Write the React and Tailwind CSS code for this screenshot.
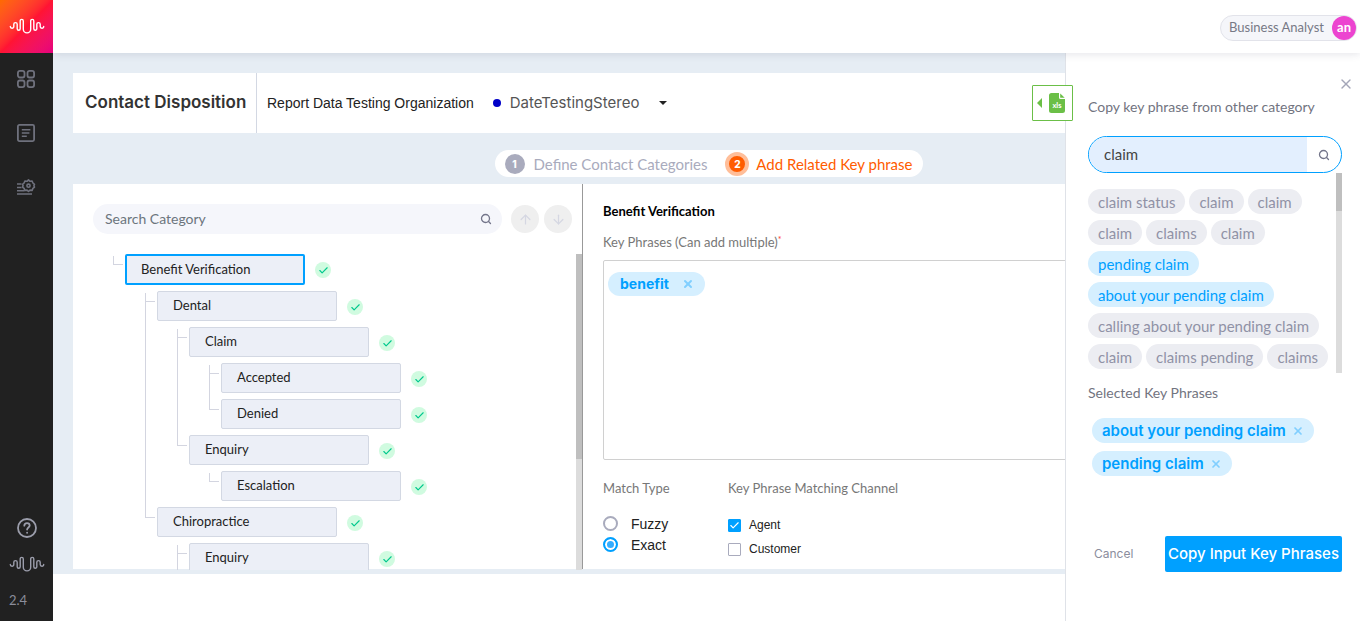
import { useState } from "react";
import { ArrowDown, ArrowUp, Check, Search, X } from "lucide-react";

// guides: one entry per ancestor level, "line" | "tee" | "end" | "none"
const CATEGORIES = [
  { name: "Benefit Verification", guides: ["end"] },
  { name: "Dental", guides: ["none", "tee"] },
  { name: "Claim", guides: ["none", "line", "tee"] },
  { name: "Accepted", guides: ["none", "line", "line", "tee"] },
  { name: "Denied", guides: ["none", "line", "line", "end"] },
  { name: "Enquiry", guides: ["none", "line", "end"] },
  { name: "Escalation", guides: ["none", "line", "none", "end"] },
  { name: "Chiropractice", guides: ["none", "end"] },
  { name: "Enquiry", guides: ["none", "none", "tee"] },
];

const PHRASES = [
  "claim status",
  "claim",
  "claim",
  "claim",
  "claims",
  "claim",
  "pending claim",
  "about your pending claim",
  "calling about your pending claim",
  "claim",
  "claims pending",
  "claims",
];

const WAVE =
  "M1.3 8.5a1.75 1.75 0 0 0 3.5 0V6.3a1.7 1.7 0 0 1 3.4 0V10.8a1.5 1.5 0 0 0 3 0V2.9a1.55 1.55 0 0 1 3.1 0V11.2a3.7 3.7 0 0 0 7.4 0V2.9a1.55 1.55 0 0 1 3.1 0V10.8a1.5 1.5 0 0 0 3 0V6.3a1.7 1.7 0 0 1 3.4 0V8.5a1.75 1.75 0 0 0 3.5 0";

function WaveLogo({ className }) {
  return (
    <svg className={className} width="36" height="17" viewBox="0 0 36 17" fill="none" stroke="currentColor" strokeWidth="1.4" strokeLinecap="round">
      <path d={WAVE} />
    </svg>
  );
}

function Sidebar() {
  return (
    <aside className="relative z-30 flex w-[53px] shrink-0 flex-col items-center bg-[#212121] text-[#6f717d]">
      <a href="#home" aria-label="Home" className="flex h-[53px] w-full items-center justify-center bg-linear-135 from-[#ff6a00] via-[#ff1433] via-50% to-[#e6007e] text-white">
        <WaveLogo />
      </a>
      <nav className="mt-[15px] flex flex-col items-center gap-8 pr-px">
        <a href="#dashboard" aria-label="Dashboard">
          <svg width="22" height="22" viewBox="0 0 22 22" fill="none" stroke="currentColor" strokeWidth="1.8">
            <rect x="2.9" y="2.9" width="6.6" height="6.6" rx="2" />
            <rect x="12.5" y="2.9" width="6.6" height="6.6" rx="2" />
            <rect x="2.9" y="12.5" width="6.6" height="6.6" rx="2" />
            <rect x="12.5" y="12.5" width="6.6" height="6.6" rx="2" />
          </svg>
        </a>
        <a href="#reports" aria-label="Reports">
          <svg width="22" height="22" viewBox="0 0 22 22" fill="none" stroke="currentColor" strokeWidth="1.8">
            <rect x="2.9" y="2.9" width="16.2" height="16.2" rx="1.5" />
            <path d="M6.8 7.8h8.6M6.8 11h7.6M6.8 14.2h5" strokeWidth="1.5" />
          </svg>
        </a>
        <a href="#settings" aria-label="Settings">
          <svg width="22" height="22" viewBox="0 0 22 22" fill="none" stroke="currentColor" strokeWidth="1.6">
            <path d="M2 8h4.5M2 11.5h4.5M2 14.8h7.5M2 18h15" />
            <path d="M13.5 3.9l1.5 1.4 2.1-.3.8 2 1.6 1.3-.6 1.4.6 1.4-1.6 1.3-.8 2-2.1-.3-1.5 1.4-1.5-1.4-2.1.3-.8-2L7.5 11.1l.6-1.4-.6-1.4 1.6-1.3.8-2 2.1.3z" strokeLinejoin="round" />
            <circle cx="13.5" cy="9.7" r="1.6" />
          </svg>
        </a>
      </nav>
      <div className="mt-auto flex w-full flex-col items-center text-[#9b9dab]">
        <a href="#help" aria-label="Help">
          <svg width="22" height="22" viewBox="0 0 22 22" fill="none" stroke="currentColor" strokeWidth="1.8" strokeLinecap="round">
            <circle cx="11" cy="11" r="9" />
            <path d="M8.3 8.7c.1-3.6 5.4-3.4 5.4-.2 0 1.9-2.6 2.1-2.6 4.1M11.1 15.6v.2" />
          </svg>
        </a>
        <WaveLogo className="mt-[17px]" />
        <span className="mt-[17px] mb-[11px] self-start pl-[9px] text-[13px] leading-5 text-[#8b8d9b]">2.4</span>
      </div>
    </aside>
  );
}

function Guide({ type }) {
  return (
    <span className="relative w-8 shrink-0">
      {type !== "none" && (
        <span className={`absolute left-5 top-0.5 border-l border-[#d3d5e0] ${type === "end" ? "h-2" : "-bottom-0.5"}`} />
      )}
      {(type === "tee" || type === "end") && (
        <span className="absolute left-5 top-2.5 w-2.5 border-t border-[#d3d5e0]" />
      )}
    </span>
  );
}

function CategoryTree() {
  const [selected, setSelected] = useState(0);

  return (
    <ul className="h-[316px] min-w-0 flex-1 overflow-hidden">
      {CATEGORIES.map((c, i) => (
        <li key={i} className={`flex ${i === 0 ? "h-[37px]" : "h-9"}`}>
          {c.guides.map((g, level) => (
            <Guide key={level} type={g} />
          ))}
          <button
            onClick={() => setSelected(i)}
            className={`w-[180px] shrink-0 rounded-[2px] bg-[#eceff7] text-left text-[13px] text-[#222] ${
              selected === i ? "h-[31px] border-2 border-[#00a0ff] pl-3.5" : "h-[30px] border border-[#d3d8e3] pl-[15px]"
            }`}
          >
            {c.name}
          </button>
          <span className="mt-2 ml-2.5 flex size-4 items-center justify-center rounded-full bg-[#d0fbe0] text-[#00c98d]">
            <Check size={11} strokeWidth={2.5} />
          </span>
        </li>
      ))}
    </ul>
  );
}

function Scrollbar({ className, thumb }) {
  return (
    <div className={`w-1.5 shrink-0 bg-[#dcdcdc] ${className}`}>
      <div className={`bg-[#bfbfbf] ${thumb}`} />
    </div>
  );
}

function CategoryPanel() {
  return (
    <section className="flex w-[510px] shrink-0 flex-col border-r border-[#999] pt-5">
      <div className="flex items-center pr-2.5 pl-5">
        <label className="flex h-[30px] flex-1 items-center rounded-full bg-[#f5f6fb] pr-2.5 pl-3">
          <input
            type="text"
            aria-label="Search Category"
            placeholder="Search Category"
            className="min-w-0 flex-1 bg-transparent text-sm outline-none placeholder:text-[#6c757d]"
          />
          <Search size={12} strokeWidth={2.6} className="text-[#73758a]" />
        </label>
        <button aria-label="Previous match" className="ml-[9px] flex size-7 items-center justify-center rounded-full bg-[#efefef] text-[#d5d7e2]">
          <ArrowUp size={15} />
        </button>
        <button aria-label="Next match" className="ml-[5px] flex size-7 items-center justify-center rounded-full bg-[#efefef] text-[#d5d7e2]">
          <ArrowDown size={15} />
        </button>
      </div>
      <div className="mt-5 flex pl-5">
        <CategoryTree />
        <Scrollbar className="h-[316px]" thumb="h-[205px]" />
      </div>
    </section>
  );
}

function RadioOption({ label, checked, onChange }) {
  return (
    <label className="flex h-[21px] items-center gap-[13px] font-['Liberation_Sans',Arial,sans-serif] text-sm text-[#222]">
      <input
        type="radio"
        name="match"
        checked={checked}
        onChange={onChange}
        className="size-[15px] appearance-none rounded-full border-2 border-[#a9abbd] checked:border-[#00a0ff] checked:bg-[#35adff] checked:shadow-[inset_0_0_0_2px_#fff]"
      />
      {label}
    </label>
  );
}

function CheckOption({ label, defaultChecked }) {
  return (
    <label className="flex h-6 items-center gap-2 font-['Liberation_Sans',Arial,sans-serif] text-xs text-[#222]">
      <span className="relative flex">
        <input
          type="checkbox"
          defaultChecked={defaultChecked}
          className="peer size-[13px] appearance-none rounded-[1px] border border-[#a9abbd] checked:border-[#00a0ff] checked:bg-[#00a0ff]"
        />
        <Check size={11} strokeWidth={2.5} className="absolute top-px left-px hidden text-white peer-checked:block" />
      </span>
      {label}
    </label>
  );
}

function KeyPhrasePanel() {
  const [match, setMatch] = useState("Exact");

  return (
    <section className="min-w-0 flex-1 pt-[17px] pl-5">
      <h2 className="text-[13px] leading-5 font-bold text-black">Benefit Verification</h2>
      <p className="mt-[11px] text-[13px] leading-5 text-[#777]">
        Key Phrases (Can add multiple)
        <sup className="text-[9px] text-[#ff3b30]">*</sup>
      </p>
      <div className="mt-2 flex h-[200px] items-start rounded-[2px] border border-[#d0d0d0] pt-[11px] pl-1">
        <span className="flex h-6 items-center gap-[13px] rounded-full bg-[#d5efff] pr-[11px] pl-3 font-['Inter',sans-serif] text-sm font-bold text-[#00a0ff]">
          benefit
          <button aria-label="Remove benefit" className="text-[#80cfff]">
            <X size={12} strokeWidth={4} />
          </button>
        </span>
      </div>
      <div className="mt-[18px] flex gap-[58px]">
        <fieldset className="w-[67px]">
          <legend className="mb-[15px] text-[13px] leading-5 whitespace-nowrap text-[#777]">Match Type</legend>
          {["Fuzzy", "Exact"].map((m) => (
            <RadioOption key={m} label={m} checked={match === m} onChange={() => setMatch(m)} />
          ))}
        </fieldset>
        <fieldset>
          <legend className="mb-[15px] text-[13px] leading-5 whitespace-nowrap text-[#777]">Key Phrase Matching Channel</legend>
          <CheckOption label="Agent" defaultChecked />
          <CheckOption label="Customer" />
        </fieldset>
      </div>
    </section>
  );
}

function CopyDrawer() {
  const [selected, setSelected] = useState(["about your pending claim", "pending claim"]);
  const [query, setQuery] = useState("claim");

  const toggle = (p) =>
    setSelected((prev) => (prev.includes(p) ? prev.filter((s) => s !== p) : [...prev, p]));

  return (
    <aside className="absolute top-[53px] right-0 bottom-0 z-10 w-[295px] border-l border-[#dfe2e8] bg-white pr-[18px] pl-[22px]">
      <button aria-label="Close" className="absolute top-[23px] right-1.5 text-[#a4a6b8]">
        <X size={16} strokeWidth={2} />
      </button>
      <h2 className="pt-11 text-sm leading-5 text-[#72747f]">Copy key phrase from other category</h2>
      <div className="mt-[19px] flex h-[37px] overflow-hidden rounded-full border border-[#00a0ff]">
        <input
          type="text"
          aria-label="Search key phrase"
          value={query}
          onChange={(e) => setQuery(e.target.value)}
          className="min-w-0 flex-1 bg-[#e3effe] pl-[15px] text-[15px] text-[#444] outline-none"
        />
        <button aria-label="Search" className="flex w-[34px] items-center justify-center text-[#73758a]">
          <Search size={12} strokeWidth={2.6} />
        </button>
      </div>
      <div className="flex justify-between">
        <ul className="flex h-[200px] flex-wrap content-start gap-x-1 gap-y-1.5 pt-4">
          {PHRASES.map((p, i) => (
            <li key={i} className="flex">
              <button
                onClick={() => toggle(p)}
                className={`h-[25px] rounded-full px-2.5 text-[15px] leading-5 ${
                  selected.includes(p) ? "bg-[#d5efff] text-[#00a0ff]" : "bg-[#ecedf2] text-[#9092a6]"
                }`}
              >
                {p}
              </button>
            </li>
          ))}
        </ul>
        <Scrollbar thumb="h-[38px]" />
      </div>
      <h3 className="mt-2.5 text-sm leading-5 text-[#72747f]">Selected Key Phrases</h3>
      <ul className="mt-[15px] ml-1 flex h-[90px] flex-col items-start gap-2">
        {selected.map((p) => (
          <li key={p} className="flex h-[25px] items-center gap-1.5 rounded-full bg-[#d5efff] px-2.5 font-['Inter',sans-serif] text-[15px] leading-5 font-semibold text-[#00a0ff]">
            {p}
            <button aria-label={`Remove ${p}`} onClick={() => toggle(p)} className="text-[#80cfff]">
              <X size={12} strokeWidth={3.5} />
            </button>
          </li>
        ))}
      </ul>
      <div className="mt-7 flex justify-between pl-1.5 font-['Inter',sans-serif]">
        <button className="text-xs text-[#8b8d9d]">Cancel</button>
        <button className="h-9 w-[177px] rounded-[2px] bg-[#00a0ff] text-[15px] font-medium whitespace-nowrap text-white">Copy Input Key Phrases</button>
      </div>
    </aside>
  );
}

export default function App() {
  return (
    <div className="relative flex min-h-screen overflow-hidden bg-white font-['Lato','Open_Sans',sans-serif]">
      <Sidebar />
      <div className="flex min-w-0 flex-1 flex-col">
        <header className="relative z-20 flex h-[53px] items-center justify-end bg-white pr-[3px] shadow-[0_1px_8px_rgba(60,60,90,0.14)]">
          <button className="mt-0.5 flex h-[26px] items-center gap-2 rounded-full border border-[#e2e3ea] bg-[#f5f6fa] pl-2 text-[13px] text-[#777986]">
            Business Analyst
            <span className="flex size-6 items-center justify-center rounded-full bg-[#ec44d0] text-[13px] font-bold text-white">an</span>
          </button>
        </header>
        <main className="bg-[#e6edf4] px-5 pt-5 pb-[5px]">
          <div className="flex h-[60px] items-center bg-white">
            <h1 className="flex h-full w-[184px] items-center border-r border-[#d3d8e3] pl-3 font-['Inter',sans-serif] text-[17px] font-semibold whitespace-nowrap text-[#333]">
              Contact Disposition
            </h1>
            <span className="ml-2.5 font-['Liberation_Sans',Arial,sans-serif] text-sm text-[#222]">Report Data Testing Organization</span>
            <button className="ml-[19px] flex items-center font-['Inter',sans-serif] text-[15px] text-[#555]">
              <span className="mr-[9px] size-2 rounded-full bg-[#0000c8]" />
              DateTestingStereo
              <span className="ml-5 border-x-4 border-t-4 border-x-transparent border-t-[#222]" />
            </button>
          </div>
          <div className="mt-[17px] flex justify-center pl-1">
            <ol className="flex h-[27px] w-[428px] items-center rounded-full bg-white text-[15px] leading-5">
              <li className="flex items-center pl-2.5 whitespace-nowrap text-[#a9abbd]">
                <span className="mr-[9px] flex size-5 items-center justify-center rounded-full bg-[#a9abbd] font-['Inter',sans-serif] text-[10px] font-extrabold text-white">1</span>
                Define Contact Categories
              </li>
              <li className="ml-auto flex items-center pr-2.5 whitespace-nowrap text-[#ff5c00]">
                <span className="mr-[7px] flex size-6 items-center justify-center rounded-full border-4 border-[#ffbe99] bg-[#ff5c00] font-['Inter',sans-serif] text-[10px] font-extrabold text-white">2</span>
                Add Related Key phrase
              </li>
            </ol>
          </div>
          <div className="mt-[7px] flex h-[385px] bg-white">
            <CategoryPanel />
            <KeyPhrasePanel />
          </div>
        </main>
      </div>
      <CopyDrawer />
      <button aria-label="Export xls" className="absolute top-[85px] right-[287px] z-20 flex h-9 w-[41px] items-center gap-[7px] rounded-[1px] border border-[#6bbf47] bg-white pl-1">
        <span className="border-y-5 border-r-5 border-y-transparent border-r-[#6bbf47]" />
        <svg width="16" height="20" viewBox="0 0 16 20" className="text-[#6bbf47]">
          <path d="M2.5 0h7.5v4.5a1.5 1.5 0 0 0 1.5 1.5H16v11.5a2.5 2.5 0 0 1-2.5 2.5h-11A2.5 2.5 0 0 1 0 17.500V2.500A2.5 2.5 0 0 1 2.500 0z" fill="currentColor" />
          <path d="M11.2 0.500v4.300h4.500z" fill="currentColor" />
          <text x="8" y="15" textAnchor="middle" fontSize="7.5" fontWeight="bold" fill="#fff">xls</text>
        </svg>
      </button>
    </div>
  );
}
